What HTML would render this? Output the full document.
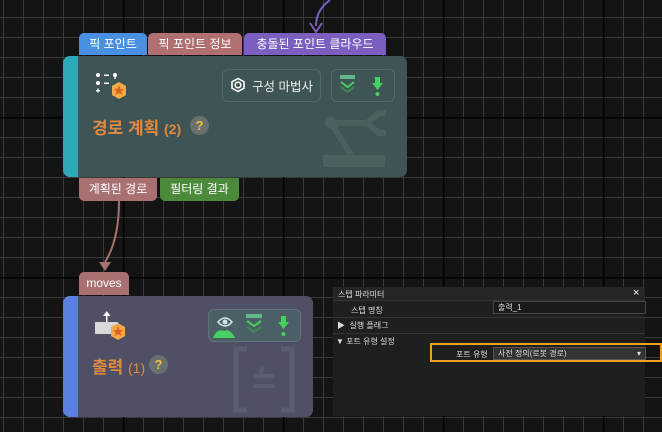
<!DOCTYPE html>
<html><head><meta charset="utf-8"><style>
*{margin:0;padding:0;box-sizing:border-box}
body{width:662px;height:432px;overflow:hidden;position:relative;background-color:#141414;
font-family:"Liberation Sans","Noto Sans CJK KR",sans-serif;
background-image:
linear-gradient(90deg,#000 0 1.5px,transparent 1.5px),
linear-gradient(180deg,#000 0 1.5px,transparent 1.5px),
linear-gradient(90deg,#3a3a3a 0 1px,transparent 1px),
linear-gradient(180deg,#3a3a3a 0 1px,transparent 1px);
background-size:160px 160px,160px 160px,20px 20px,20px 20px;
background-position:123px 0,0 117px,3px 0,0 17px;}
.abs{position:absolute}
.tab{position:absolute;height:22px;border-radius:5px 5px 0 0;color:#fff;font-size:12px;line-height:22px;text-align:center;white-space:nowrap}
.btab{position:absolute;height:23px;border-radius:0 0 5px 5px;color:#fff;font-size:12px;line-height:22px;text-align:center;white-space:nowrap}
.node{position:absolute;border-radius:7px;overflow:hidden}
.strip{position:absolute;left:0;top:0;bottom:0;width:15px}
.box{position:absolute;border:1.5px solid rgba(255,255,255,0.12);border-radius:6px}
.q{position:absolute;width:19px;height:19px;border-radius:50%;background:#6a6f70;color:#f0c040;font-weight:bold;font-size:13px;text-align:center;line-height:19px}
.panel{position:absolute;left:333px;top:287px;width:312px;height:129px;background:#1f1f1f;font-size:8px;color:#ddd}
</style></head><body>
<svg class="abs" style="left:0;top:0" width="662" height="432">
<path d="M330 0 Q316 10 316 26" stroke="#7a5fbf" stroke-width="2" fill="none"/>
<path d="M310 23 L316 32 L322 23" stroke="#7a5fbf" stroke-width="2" fill="none"/>
<path d="M119 201 Q119 240 105 262" stroke="#a87070" stroke-width="2" fill="none"/>
<path d="M99 262 L111 262 L105 271 Z" fill="#a87070"/>
</svg>

<div class="tab" style="left:79px;top:33px;width:68px;background:#4a90e2">픽 포인트</div>
<div class="tab" style="left:148px;top:33px;width:94px;background:#b07070">픽 포인트 정보</div>
<div class="tab" style="left:244px;top:33px;width:142px;background:#7a5fbf">충돌된 포인트 클라우드</div>

<div class="node" style="left:63px;top:56px;width:344px;height:121px;background:#3f5454">
<div class="strip" style="background:#2fa8b8"></div>
<svg class="abs" style="left:30px;top:14px" width="38" height="38">
<circle cx="5" cy="5" r="2" fill="#fff"/><rect x="11" y="4.5" width="5" height="1.5" fill="#fff"/><circle cx="22" cy="5" r="2" fill="#fff"/><rect x="21.3" y="5" width="1.4" height="4" fill="#fff"/>
<circle cx="5" cy="13" r="2" fill="#fff"/><rect x="11" y="12.5" width="5" height="1.5" fill="#fff"/>
<rect x="3" y="20" width="4" height="1.4" fill="#fff"/><rect x="4.3" y="18.5" width="1.4" height="4" fill="#fff"/>
<polygon points="26,12 33,16 33,25 26,29 19,25 19,16" fill="#f3a94a"/>
<polygon points="26,15 27.6,19 31,19 28.3,21.5 29.3,25 26,23 22.7,25 23.7,21.5 21,19 24.4,19" fill="#d9661c"/>
</svg>
<div class="abs" style="left:29px;top:58px;color:#e08a40;font-size:17px;font-weight:bold">경로 계획 <span style="font-size:14px">(2)</span></div>
<div class="q" style="left:127px;top:60px">?</div>
<div class="box" style="left:159px;top:13px;width:99px;height:33px"></div>
<svg class="abs" style="left:167px;top:21px" width="16" height="16"><polygon points="8,1.5 14,4.8 14,11.2 8,14.5 2,11.2 2,4.8" fill="none" stroke="#fff" stroke-width="1.6"/><circle cx="8" cy="8" r="2.8" fill="none" stroke="#fff" stroke-width="1.6"/></svg>
<div class="abs" style="left:189px;top:20px;color:#eee;font-size:12.5px">구성 마법사</div>
<div class="box" style="left:268px;top:13px;width:64px;height:33px"></div>
<svg class="abs" style="left:275px;top:19px" width="54" height="24">
<rect x="2" y="0" width="15" height="4" fill="#62b88a"/>
<path d="M3 7 L9.5 12 L16 7" stroke="#45d060" stroke-width="2" fill="none"/>
<path d="M3 12 L9.5 17 L16 12" stroke="#3a8a55" stroke-width="2" fill="none"/>
<rect x="37" y="2" width="5" height="6" fill="#45d060"/><polygon points="34,8 45,8 39.5,15" fill="#45d060"/><circle cx="39.5" cy="19" r="2" fill="#45d060"/>
</svg>
<svg class="abs" style="left:258px;top:50px" width="70" height="68" fill="#4c6060">
<rect x="2" y="49" width="62" height="12" rx="2"/>
<circle cx="10" cy="17" r="6"/>
<path d="M10 17 L30 49" stroke="#4c6060" stroke-width="6"/>
<path d="M10 17 L46 17 L58 7 L65 7 M46 17 L58 27 L65 27" stroke="#4c6060" stroke-width="6" fill="none"/>
</svg>
</div>

<div class="btab" style="left:79px;top:178px;width:78px;background:#a87070">계획된 경로</div>
<div class="btab" style="left:160px;top:178px;width:79px;background:#4a8a3a">필터링 결과</div>

<div class="tab" style="left:79px;top:272px;width:50px;height:23px;background:#a87070;font-size:12px">moves</div>

<div class="node" style="left:63px;top:296px;width:250px;height:121px;background:#4f5066">
<div class="strip" style="background:#5a80e0"></div>
<svg class="abs" style="left:30px;top:14px" width="38" height="38">
<rect x="2" y="12" width="23" height="12" fill="#d8d8d8"/>
<rect x="13" y="4" width="1.5" height="8" fill="#fff"/><polygon points="10,6 17.5,6 13.75,1" fill="#fff"/>
<polygon points="25,13 32,17 32,26 25,30 18,26 18,17" fill="#f3a94a"/>
<polygon points="25,16 26.6,20 30,20 27.3,22.5 28.3,26 25,24 21.7,26 22.7,22.5 20,20 23.4,20" fill="#d9661c"/>
</svg>
<div class="abs" style="left:29px;top:57px;color:#e08a40;font-size:17px;font-weight:bold">출력 <span style="font-size:14px;font-weight:normal">(1)</span></div>
<div class="q" style="left:86px;top:59px">?</div>
<div class="box" style="left:145px;top:13px;width:93px;height:33px;background:#4a6066"></div>
<svg class="abs" style="left:150px;top:18px" width="85" height="26">
<path d="M5 8 Q12 0 19 8 Q12 16 5 8Z" fill="none" stroke="#cfe6ef" stroke-width="1.6"/><circle cx="12" cy="8" r="2.5" fill="#cfe6ef"/>
<path d="M0 24 Q4 14 11 17 Q17 14 22 24 Z" fill="#45d060"/>
<rect x="33" y="0" width="16" height="4" fill="#62b88a"/>
<path d="M34 7 L41 12 L48 7" stroke="#45d060" stroke-width="2" fill="none"/>
<path d="M34 13 L41 18 L48 13" stroke="#3a8a55" stroke-width="2" fill="none"/>
<rect x="68" y="2" width="5" height="6" fill="#45d060"/><polygon points="65,8 76,8 70.5,15" fill="#45d060"/><circle cx="70.5" cy="20" r="2" fill="#45d060"/>
</svg>
<svg class="abs" style="left:170px;top:50px" width="62" height="68" fill="none" stroke="#5a5c72" stroke-width="5">
<path d="M14 3 L3 3 L3 64 L14 64 M48 3 L59 3 L59 64 L48 64"/>
<path d="M20 30 L42 30 M20 40 L42 40 M30 20 L26 32" stroke-width="4"/>
</svg>
</div>

<div class="panel">
<div class="abs" style="left:0;top:0;width:312px;height:14px;background:#262626;border-bottom:1px solid #333"></div>
<div class="abs" style="left:5px;top:2px">스텝 파라미터</div>
<div class="abs" style="left:300px;top:0;font-size:11px;color:#fff">×</div>
<div class="abs" style="left:18px;top:18px">스텝 명칭</div>
<div class="abs" style="left:160px;top:14px;width:153px;height:13px;border:1px solid #444;background:#1a1a1a;padding-left:4px;line-height:11px">출력_1</div>
<div class="abs" style="left:0;top:30px;width:312px;height:1px;background:#333"></div>
<div class="abs" style="left:4px;top:33px">▶ &nbsp;실행 플래그</div>
<div class="abs" style="left:0;top:46px;width:312px;height:1px;background:#333"></div>
<div class="abs" style="left:3px;top:49px">▼ 포트 유형 설정</div>
<div class="abs" style="left:97px;top:56px;width:232px;height:19px;border:2px solid #f0a020"></div>
<div class="abs" style="left:123px;top:62px">포트 유형</div>
<div class="abs" style="left:160px;top:60px;width:153px;height:13px;border:1px solid #555;background:#333;padding-left:4px;line-height:11px">사전 정의(로봇 경로)<span style="position:absolute;right:4px">▾</span></div>
</div>
</body></html>
